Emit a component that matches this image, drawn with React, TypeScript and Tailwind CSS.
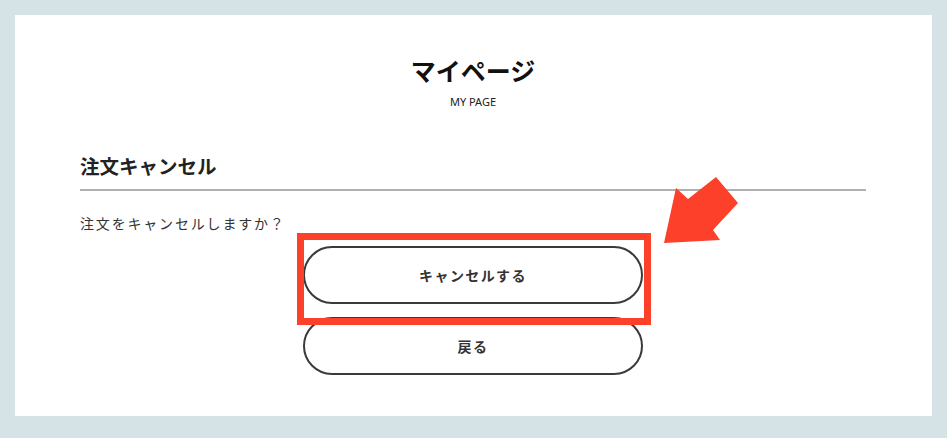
import React from "react";

export default function App() {
  return (
    <div
      className="w-[947px] h-[438px] bg-[#d5e3e6] p-[15px] pb-[22px] box-border"
      style={{ fontFamily: '"Noto Sans CJK JP", "Noto Sans", sans-serif' }}
    >
      <div className="relative w-full h-full bg-white pl-[65px] pr-[66px] pt-[37px] box-border">
        <h1 className="text-center text-[25px] leading-[36px] font-bold text-[#111] m-0">マイページ</h1>
        <p className="text-center text-[11px] leading-[16px] mt-[6px] text-[#222]" style={{ fontFamily: '"Noto Sans", sans-serif' }}>MY PAGE</p>

        <h2 className="mt-[42px] text-[19.5px] leading-[28px] font-bold text-[#222] pb-[9px] border-b-2 border-[#b0b0b0]">注文キャンセル</h2>

        <p className="mt-[22px] text-[14px] leading-[20px] tracking-[0.13em] text-[#333]">注文をキャンセルしますか？</p>

        <div className="mt-[13px] flex flex-col items-center gap-[13px]">
          <button className="w-[340px] h-[58px] rounded-full border-2 border-[#3a3a3a] bg-white text-[14px] font-bold tracking-[0.1em] text-[#333]">
            キャンセルする
          </button>
          <button className="w-[340px] h-[58px] rounded-full border-2 border-[#3a3a3a] bg-white text-[14px] font-bold tracking-[0.1em] text-[#333]">
            戻る
          </button>
        </div>

        {/* annotation overlay: red box */}
        <div className="absolute left-[282px] top-[218px] w-[354px] h-[92px] border-[7px] border-[#fc402a] pointer-events-none" />

        {/* annotation overlay: arrow */}
        <svg className="absolute left-[618px] top-[130px]" width="120" height="110" viewBox="633 145 120 110">
          <polygon
            points="664,243 676,188 688,199 716,177 738,203 713,230 720,240"
            fill="#fc402a"
          />
        </svg>
      </div>
    </div>
  );
}
